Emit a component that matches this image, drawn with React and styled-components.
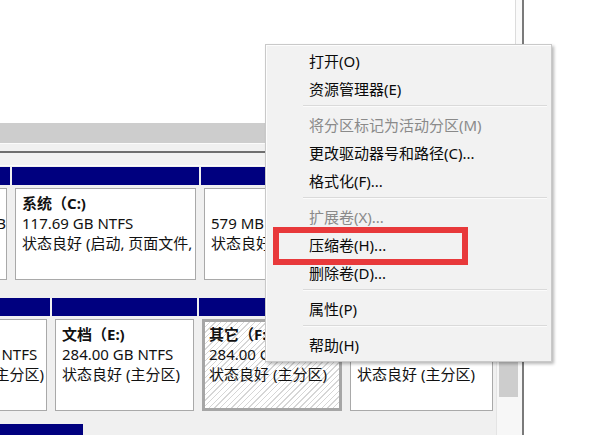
import React from 'react';
import styled, { createGlobalStyle, css } from 'styled-components';

const GlobalStyle = createGlobalStyle`
  html, body { margin: 0; padding: 0; background: #fff; }
  body { font-family: "Noto Sans", "Noto Sans CJK SC", sans-serif; }
  #root { width: 590px; height: 435px; overflow: hidden; }
`;

const Screen = styled.div`
  position: relative;
  display: flex;
  width: 590px;
  height: 435px;
  overflow: hidden;
  background: #fff;
  font-family: "Noto Sans", "Noto Sans CJK SC", sans-serif;
  font-size: 15px;
  color: #111;
`;

const Window = styled.div`
  width: 522px;
  flex: none;
  display: flex;
  flex-direction: column;
  border-right: 2px solid #7a7a7a;
  background: #f0f0f0;
`;

const TopPane = styled.div`
  height: 123px;
  flex: none;
  display: flex;
  background: #fff;
`;

const ListArea = styled.div`
  flex: 1;
`;

const ListEdge = styled.div`
  width: 6px;
  border-left: 1px solid #dcdcdc;
  background: #fafafa;
`;

const HScroll = styled.div`
  height: 20px;
  flex: none;
  background: #cdcdcd;
`;

const SplitTop = styled.div`
  height: 7px;
  flex: none;
  border-top: 1px solid #fbfbfb;
  background: #f0f0f0;
`;

const Splitter = styled.div`
  height: 2px;
  flex: none;
  background: #6f6f6f;
`;

const SplitBottom = styled.div`
  height: 12px;
  flex: none;
  background: #f2f2f2;
  border-bottom: 1px solid #fcfcfc;
`;

const BottomPane = styled.div`
  flex: 1;
  display: flex;
  min-height: 0;
`;

const DiskArea = styled.div`
  flex: 1;
  min-width: 0;
  overflow: hidden;
  padding-top: 1px;
`;

const DiskRows = styled.div`
  margin-left: -84px;
  display: flex;
  flex-direction: column;
`;

const Row = styled.div`
  display: flex;
  gap: 2px;
  height: 116px;
  flex: none;
  margin-top: ${(p) => p.$top || 0}px;
`;

const Partition = styled.div`
  display: flex;
  flex-direction: column;
  background: #f0f0f0;
  ${(p) => (p.$w ? css`width: ${p.$w}px; flex: none;` : css`flex: 1; min-width: 0;`)}
`;

const Header = styled.div`
  height: 18px;
  flex: none;
  background: #00007f;
`;

const Body = styled.div`
  flex: 1;
  display: flex;
  padding: 3px;
  min-height: 0;
`;

const Box = styled.div`
  flex: 1;
  min-width: 0;
  overflow: hidden;
  white-space: nowrap;
  line-height: 20px;
  background: #fff;
  border: 1px solid #a9a9a9;
  padding: 4px 6px;
  ${(p) =>
    p.$selected &&
    css`
      border: 3px solid #a6a6a6;
      padding: 2px 4px;
      background: repeating-linear-gradient(135deg, #ffffff 0 3px, #d6d6d6 3px 4px);
    `}
`;

const Name = styled.div`
  font-weight: 700;
  min-height: 20px;
`;

const Line = styled.div``;

const VScroll = styled.div`
  width: 26px;
  flex: none;
  background: #f7f7f7;
  border-left: 1px solid #e4e4e4;
  box-sizing: border-box;
  padding: 60px 4px 0 2px;
`;

const Thumb = styled.div`
  height: 171px;
  background: #cdcdcd;
`;

const Menu = styled.div`
  position: absolute;
  left: 265px;
  top: 44px;
  width: 287px;
  box-sizing: border-box;
  padding: 2px 0;
  background: #f2f2f2;
  border: 1px solid #c9c9c9;
  box-shadow: inset 1px 1px 0 #fdfdfd, 2px 2px 3px rgba(0, 0, 0, 0.28);
  font-family: "Noto Sans", "Noto Sans CJK SC", sans-serif;
  font-size: 15px;
`;

const Item = styled.div`
  height: 28px;
  line-height: 28px;
  padding-left: 43px;
  white-space: nowrap;
  color: ${(p) => (p.$disabled ? '#8a8a8a' : '#0a0a0a')};
`;

const Separator = styled.div`
  height: 1px;
  margin: 2px 4px 5px 37px;
  background: #dadada;
  box-shadow: 0 1px 0 #fbfbfb;
`;

const Highlight = styled.div`
  position: absolute;
  left: 273px;
  top: 227px;
  width: 195px;
  height: 38px;
  box-sizing: border-box;
  border: 6px solid #e8393b;
`;

const Part = ({ w, selected, name, lines = [] }) => (
  <Partition $w={w}>
    <Header />
    <Body>
      <Box $selected={selected}>
        <Name>{name || '\u00a0'}</Name>
        {lines.map((l, i) => (
          <Line key={i}>{l}</Line>
        ))}
      </Box>
    </Body>
  </Partition>
);

const menuItems = [
  { t: '打开(O)' },
  { t: '资源管理器(E)' },
  { sep: true },
  { t: '将分区标记为活动分区(M)', d: true },
  { t: '更改驱动器号和路径(C)...' },
  { t: '格式化(F)...' },
  { sep: true },
  { t: '扩展卷(X)...', d: true },
  { t: '压缩卷(H)...' },
  { t: '删除卷(D)...' },
  { sep: true },
  { t: '属性(P)' },
  { sep: true },
  { t: '帮助(H)' },
];

export default function App() {
  return (
    <>
      <GlobalStyle />
      <Screen>
        <Window>
          <TopPane>
            <ListArea />
            <ListEdge />
          </TopPane>
          <HScroll />
          <SplitTop />
          <Splitter />
          <SplitBottom />
          <BottomPane>
            <DiskArea>
              <DiskRows>
                <Row>
                  <Part w={94} name="" lines={['1000.00 GB', '状态良好']} />
                  <Part
                    w={187}
                    name="系统（C:)"
                    lines={['117.69 GB NTFS', '状态良好 (启动, 页面文件, 故障转储, 主分区)']}
                  />
                  <Part lines={['579 MB', '状态良好 (恢复分区)']} />
                </Row>
                <Row $top={15}>
                  <Part w={134} name="" lines={['284.00 GB NTFS', '状态良好 (主分区)']} />
                  <Part w={145} name="文档（E:)" lines={['284.00 GB NTFS', '状态良好 (主分区)']} />
                  <Part w={146} selected name="其它（F:)" lines={['284.00 GB NTFS', '状态良好 (主分区)']} />
                  <Part name="软件（G:)" lines={['284.00 GB NTFS', '状态良好 (主分区)']} />
                </Row>
                <Row $top={10}>
                  <Part w={167} name="" lines={[]} />
                </Row>
              </DiskRows>
            </DiskArea>
            <VScroll>
              <Thumb />
            </VScroll>
          </BottomPane>
        </Window>
        <Menu>
          {menuItems.map((m, i) =>
            m.sep ? <Separator key={i} /> : <Item key={i} $disabled={m.d}>{m.t}</Item>
          )}
        </Menu>
        <Highlight />
      </Screen>
    </>
  );
}
